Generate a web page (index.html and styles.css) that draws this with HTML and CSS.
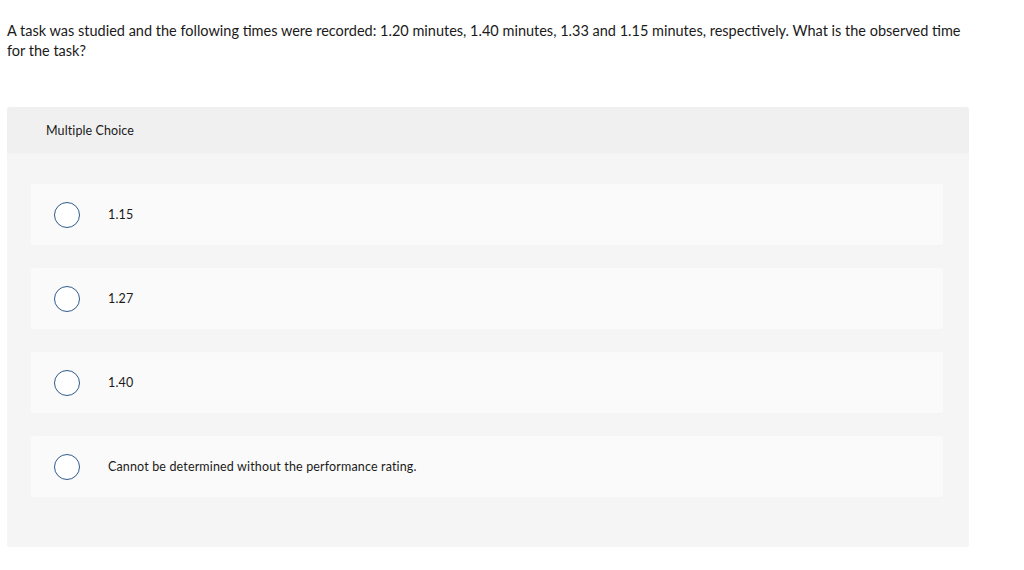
FILE: index.html
```html
<!DOCTYPE html>
<html>
<head>
<meta charset="utf-8">
<link rel="stylesheet" href="styles.css">
</head>
<body>
<div class="page">
  <p class="question">A task was studied and the following times were recorded: 1.20 minutes, 1.40 minutes, 1.33 and 1.15 minutes, respectively. What is the observed time for the task?</p>
  <div class="card">
    <div class="card-head">Multiple Choice</div>
    <div class="card-body">
      <div class="option"><span class="radio"></span><span class="label">1.15</span></div>
      <div class="option"><span class="radio"></span><span class="label">1.27</span></div>
      <div class="option"><span class="radio"></span><span class="label">1.40</span></div>
      <div class="option"><span class="radio"></span><span class="label">Cannot be determined without the performance rating.</span></div>
    </div>
  </div>
</div>
</body>
</html>
```
FILE: styles.css
```css
html, body {
  margin: 0;
  padding: 0;
  background: #ffffff;
}
body {
  font-family: Lato, "Open Sans", sans-serif;
  color: #1a1a1a;
}
.page {
  padding: 21px 55px 0 7px;
}
.question {
  margin: 0;
  font-size: 14.5px;
  line-height: 20px;
  width: 962px;
  letter-spacing: 0;
}
.card {
  margin-top: 46px;
  width: 962px;
  border-radius: 3px;
  overflow: hidden;
  background: #f5f5f5;
}
.card-head {
  background: #f0f0f0;
  height: 46px;
  display: flex;
  align-items: center;
  padding-left: 39px;
  font-size: 12.5px;
  letter-spacing: 0.1px;
}
.card-body {
  padding: 31px 26px 50px 24px;
  display: flex;
  flex-direction: column;
  gap: 23px;
}
.option {
  height: 61px;
  background: #fafafa;
  border-radius: 3px;
  display: flex;
  align-items: center;
  padding-left: 23px;
}
.radio {
  width: 24px;
  height: 24px;
  border: 1px solid #2f5b8c;
  border-radius: 50%;
  background: #ffffff;
  flex: none;
}
.label {
  margin-left: 28px;
  font-size: 12.5px;
  letter-spacing: 0.15px;
}
```
